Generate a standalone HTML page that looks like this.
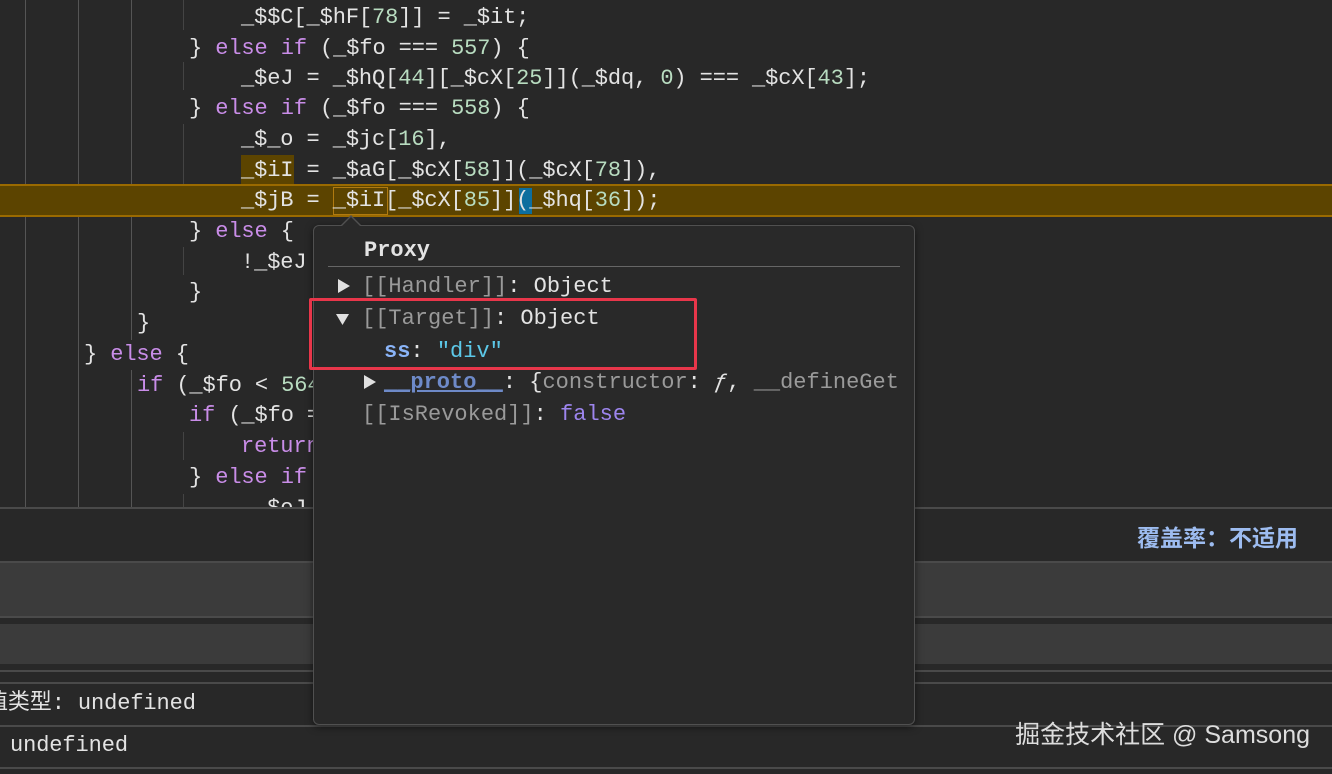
<!DOCTYPE html>
<html><head><meta charset="utf-8"><style>
*{margin:0;padding:0;box-sizing:border-box}
body{width:1332px;height:774px;background:#282828;position:relative;overflow:hidden;font-family:"Liberation Mono","Noto Sans CJK SC",monospace;color:#e3e3e3}
.c{position:absolute;font-size:22px;white-space:pre;line-height:30px;letter-spacing:-0.1px}
.k{color:#c98de8}.n{color:#b8dcc0}
.g{position:absolute;width:1px;background:#555}
.h{position:absolute;left:0;width:1332px;height:2px;background:#4a4a4a}
.band{position:absolute;left:0;width:1332px;background:#3b3b3b}
.tt{position:absolute;left:313px;top:225px;width:602px;height:500px;background:#292929;border:1px solid #505050;border-radius:6px;box-shadow:0 2px 8px rgba(0,0,0,.5)}
.r{position:absolute;font-size:22px;white-space:pre;line-height:30px}
.gr{color:#9a9a9a}
.tri{position:absolute}
</style></head><body>
<div class="g" style="left:25px;top:0;height:508px"></div>
<div class="g" style="left:78px;top:0;height:508px"></div>
<div class="g" style="left:131px;top:0;height:340px"></div>
<div class="g" style="left:131px;top:370px;height:138px"></div>
<div class="g" style="left:183px;top:0;height:30px;background:#444"></div>
<div class="g" style="left:183px;top:62px;height:28px;background:#444"></div>
<div class="g" style="left:183px;top:124px;height:60px;background:#444"></div>
<div class="g" style="left:183px;top:247px;height:28px;background:#444"></div>
<div class="g" style="left:183px;top:432px;height:28px;background:#444"></div>
<div class="g" style="left:183px;top:494px;height:14px;background:#444"></div>
<div style="position:absolute;left:0;top:184px;width:1332px;height:33px;background:#5c4400;border-top:2px solid #9a6a00;border-bottom:2px solid #9a6a00"></div>
<div style="position:absolute;left:241px;top:155px;width:53px;height:29px;background:#5c4400"></div>
<div style="position:absolute;left:333px;top:187px;width:55px;height:28px;border:1px solid #b07a10"></div>
<div style="position:absolute;left:519px;top:188px;width:13px;height:26px;background:#0d6e9e"></div>
<div class="c" style="left:241px;top:3px">_$$C[_$hF[<span class="n">78</span>]] = _$it;</div>
<div class="c" style="left:189px;top:34px">} <span class="k">else if</span> (_$fo === <span class="n">557</span>) {</div>
<div class="c" style="left:241px;top:64px">_$eJ = _$hQ[<span class="n">44</span>][_$cX[<span class="n">25</span>]](_$dq, <span class="n">0</span>) === _$cX[<span class="n">43</span>];</div>
<div class="c" style="left:189px;top:94px">} <span class="k">else if</span> (_$fo === <span class="n">558</span>) {</div>
<div class="c" style="left:241px;top:125px">_$_o = _$jc[<span class="n">16</span>],</div>
<div class="c" style="left:241px;top:156px">_$iI = _$aG[_$cX[<span class="n">58</span>]](_$cX[<span class="n">78</span>]),</div>
<div class="c" style="left:241px;top:186px">_$jB = _$iI[_$cX[<span class="n">85</span>]](_$hq[<span class="n">36</span>]);</div>
<div class="c" style="left:189px;top:217px">} <span class="k">else</span> {</div>
<div class="c" style="left:241px;top:248px">!_$eJ</div>
<div class="c" style="left:189px;top:278px">}</div>
<div class="c" style="left:137px;top:309px">}</div>
<div class="c" style="left:84px;top:340px">} <span class="k">else</span> {</div>
<div class="c" style="left:137px;top:371px"><span class="k">if</span> (_$fo &lt; <span class="n">564</span></div>
<div class="c" style="left:189px;top:401px"><span class="k">if</span> (_$fo =</div>
<div class="c" style="left:241px;top:432px"><span class="k">return</span></div>
<div class="c" style="left:189px;top:463px">} <span class="k">else if</span></div>
<div class="c" style="left:254px;top:494px;height:14px;overflow:hidden">_$eJ =</div>
<div class="h" style="top:507px"></div>
<div style="position:absolute;right:34px;top:521px;font-size:23px;font-weight:bold;color:#9dbcf0;font-family:'Noto Sans CJK SC',sans-serif;line-height:30px">覆盖率：不适用</div>
<div class="h" style="top:561px"></div>
<div class="band" style="top:563px;height:53px"></div>
<div class="h" style="top:616px"></div>
<div class="band" style="top:624px;height:40px"></div>
<div class="h" style="top:670px"></div>
<div class="h" style="top:682px"></div>
<div class="c" style="left:-14px;top:689px">值类型: undefined</div>
<div class="h" style="top:725px"></div>
<div class="c" style="left:10px;top:731px">undefined</div>
<div class="h" style="top:767px"></div>
<div style="position:absolute;right:22px;top:719px;font-size:25px;color:#ddd;font-family:'Liberation Sans','Noto Sans CJK SC',sans-serif;line-height:32px">掘金技术社区 @ Samsong</div>
<div class="tt">
 <div style="position:absolute;left:14px;top:40px;width:572px;height:1px;background:#666"></div>
 <div class="r" style="left:50px;top:10px;font-weight:bold">Proxy</div>
 <svg class="tri" style="left:24px;top:53px" width="12" height="14"><path d="M0 0L12 7L0 14Z" fill="#e0e0e0"/></svg>
 <div class="r" style="left:48px;top:46px"><span class="gr">[[Handler]]</span>: Object</div>
 <svg class="tri" style="left:22px;top:88px" width="13" height="11"><path d="M0 0L13 0L6.5 11Z" fill="#e0e0e0"/></svg>
 <div class="r" style="left:48px;top:78px"><span class="gr">[[Target]]</span>: Object</div>
 <div class="r" style="left:70px;top:111px"><span style="color:#8ab4f8;font-weight:bold">ss</span>: <span style="color:#5cc8e8">"div"</span></div>
 <svg class="tri" style="left:50px;top:149px" width="12" height="14"><path d="M0 0L12 7L0 14Z" fill="#e0e0e0"/></svg>
 <div class="r" style="left:70px;top:142px"><span style="color:#6e8ac8;font-weight:bold;text-decoration:underline">__proto__</span>: {<span class="gr">constructor</span>: <i>ƒ</i>, <span class="gr">__defineGet</span></div>
 <div class="r" style="left:48px;top:174px"><span class="gr">[[IsRevoked]]</span>: <span style="color:#9d85ee">false</span></div>
</div>
<div style="position:absolute;left:340px;top:215px;width:0;height:0;border-left:11px solid transparent;border-right:11px solid transparent;border-bottom:11px solid #505050"></div>
<div style="position:absolute;left:341px;top:217px;width:0;height:0;border-left:10px solid transparent;border-right:10px solid transparent;border-bottom:10px solid #292929"></div>
<div style="position:absolute;left:309px;top:298px;width:388px;height:72px;border:3px solid #e8364a;border-radius:2px"></div>
</body></html>
